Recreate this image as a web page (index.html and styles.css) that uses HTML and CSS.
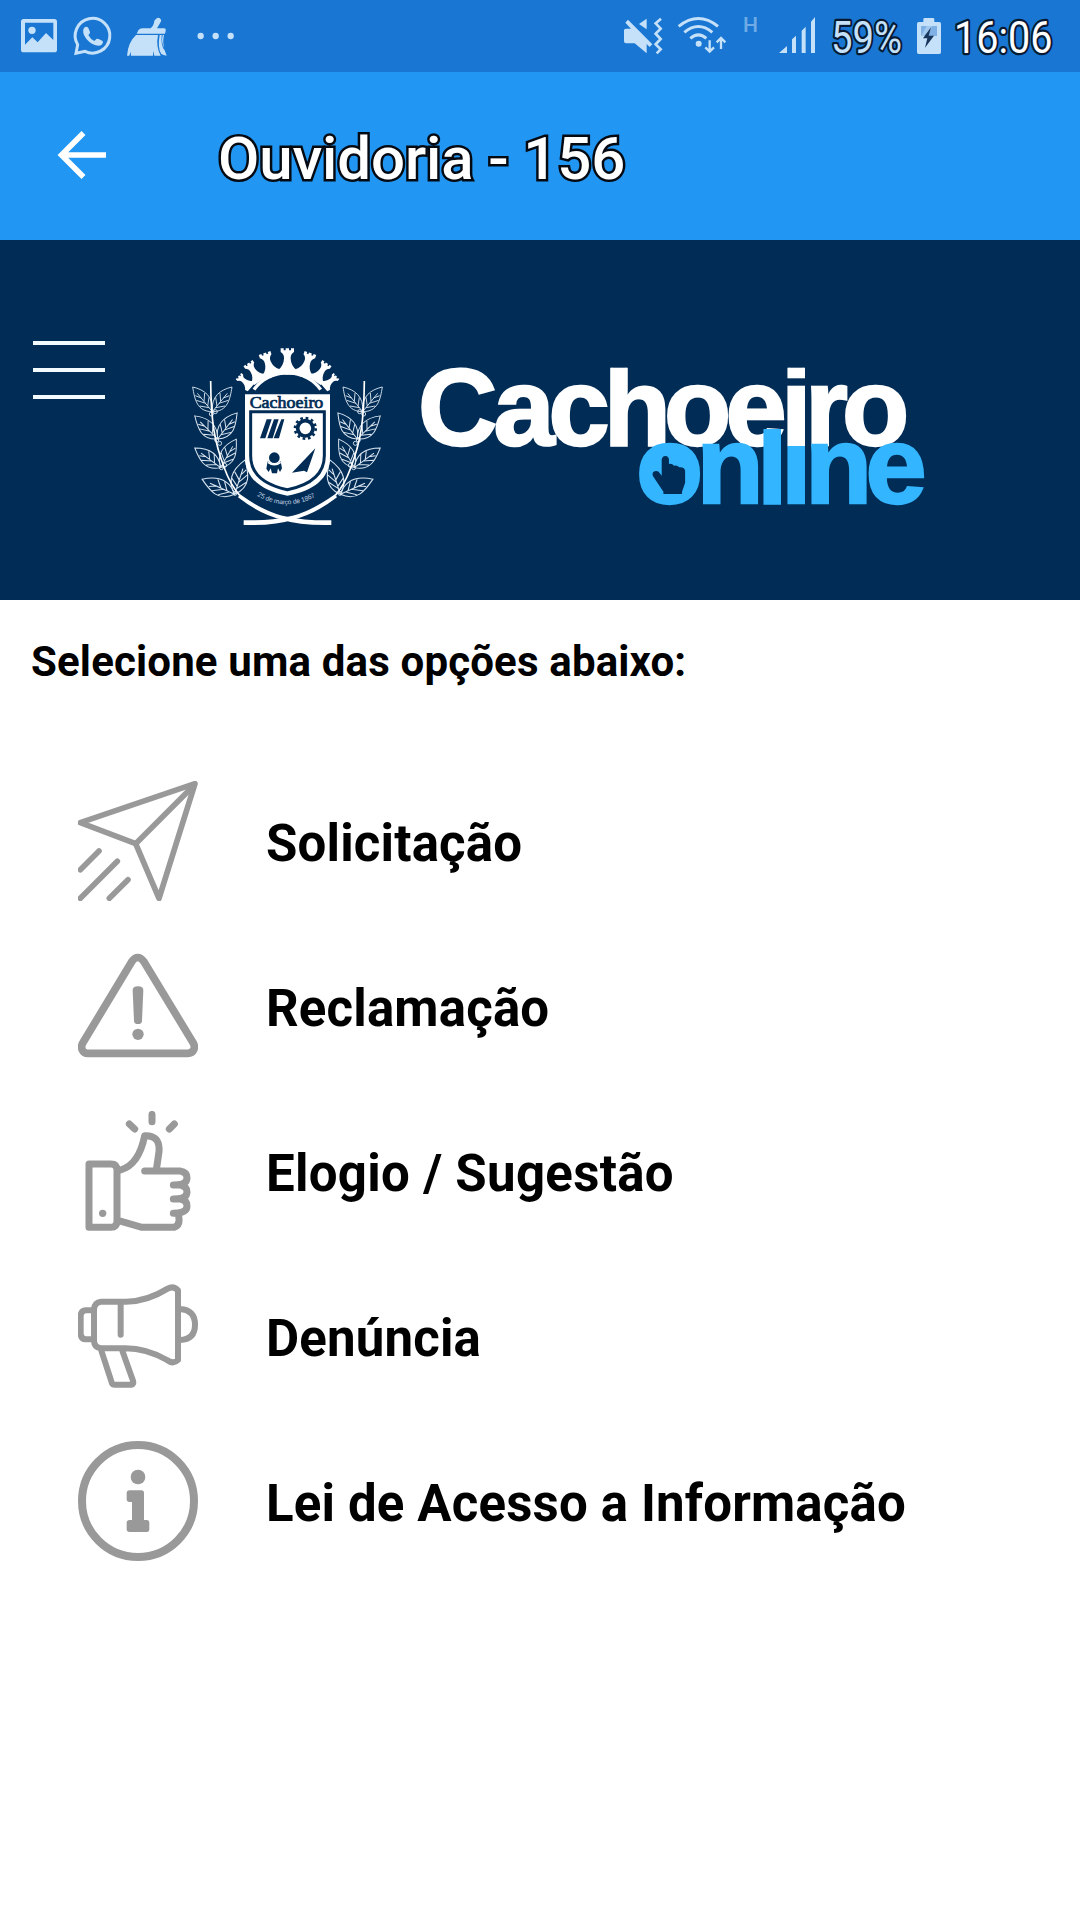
FILE: index.html
```html
<!DOCTYPE html>
<html lang="pt-BR">
<head>
<meta charset="utf-8">
<title>Ouvidoria - 156</title>
<link rel="stylesheet" href="styles.css">
</head>
<body>
<div class="status">
  <div class="status-group">
    <svg width="67" height="72" viewBox="0 0 201 216"><path fill="currentColor" fill-rule="evenodd" d="M71 57H163Q171 57 171 65V149Q171 157 163 157H71Q63 157 63 149V65Q63 57 71 57ZM75 68V134L97 112L113 127L138 99L160 120V68Z"/><circle cx="96" cy="91" r="11" fill="currentColor"/></svg>
    <svg width="50" height="72" viewBox="201 0 150 216"><path fill="none" stroke="currentColor" stroke-width="9" d="M228 160L233 134A52 52 0 1 1 255 154Z"/><path fill="currentColor" d="M252 84Q259 77 265 84L270 96Q271 101 265 105Q271 117 283 123L289 117Q292 115 296 117L308 123Q311 128 305 134Q296 141 277 132Q256 120 250 100Q247 91 252 84Z"/></svg>
    <svg width="65" height="72" viewBox="351 0 195 216"><path fill="currentColor" d="M470 55Q476 51 481 56Q486 60 482 66L471 85H493Q499 86 497 93L495 101H410L415 91Q419 85 427 85H452Q462 76 463 62ZM408 105H474Q467 140 482 167H463L459 152V167H393L392 155L388 167H381Q384 127 408 105ZM479 105H485Q482 139 494 151L500 167Q490 166 484 162Q472 145 479 105ZM488 105H492Q487 128 493 145Q483 128 488 105Z"/></svg>
    <svg width="78" height="72" viewBox="546 0 234 216"><g fill="currentColor"><circle cx="602" cy="108" r="9.500"/><circle cx="647" cy="108" r="9.500"/><circle cx="692" cy="108" r="9.500"/></g></svg>
  </div>
  <div class="status-group">
    <svg width="50" height="72" viewBox="60 0 150 216"><path fill="currentColor" d="M72 91Q72 86 78 86H93L76 68L84 59L157 133L149 141L140 132V160L104 130H78Q72 130 72 124ZM140 56V88L117 72Z"/><path fill="none" stroke="currentColor" stroke-width="8" d="M183 56L167 70L182 86L167 101L182 117L167 133L182 148L170 160"/></svg>
    <svg width="65" height="72" viewBox="210 0 195 216"><g fill="none" stroke="currentColor" stroke-width="9"><path d="M236 79Q295 32 354 79M253 97Q295 62 337 97M271 115Q295 94 319 115"/><path stroke-width="7" d="M329 121V154M316 142L329 155L342 142M363 147V115M350 127L363 114L376 127"/></g><circle cx="296" cy="131" r="9" fill="currentColor"/></svg>
    <svg class="faint" width="40" height="72" viewBox="0 0 40 72"><text x="8" y="32" font-size="21" font-weight="500" textLength="15" lengthAdjust="spacingAndGlyphs">H</text></svg>
    <svg width="45" height="72" viewBox="525 0 135 216"><path fill="currentColor" d="M537 159L561 138V159ZM576 118L588 107V159H576ZM605 92L617 80V159H605ZM633 65L645 51V159H633Z"/></svg>
    <svg width="90" height="72" viewBox="820 0 90 72"><text class="outlined" x="831" y="53" font-size="44" textLength="71" lengthAdjust="spacingAndGlyphs">59%</text></svg>
    <svg width="40" height="72" viewBox="930 0 120 216"><path fill="currentColor" d="M970 66V58Q970 54 974 54H999Q1003 54 1003 58V66H1018Q1023 66 1023 71V157Q1023 162 1018 162H956Q951 162 951 157V71Q951 66 956 66Z"/><path fill="#7fb1e5" d="M963 78H1011V108H963Z"/><path fill="currentColor" d="M980 78H996L986 101H977L968 117L963 108Z" opacity=".5"/><path fill="#18365c" d="M993 82L969 115H982L975 143L1002 107H986Z"/></svg>
    <svg width="130" height="72" viewBox="950 0 130 72"><text class="outlined clock" x="954" y="53" font-size="44" textLength="98.500" lengthAdjust="spacingAndGlyphs">16:06</text></svg>
  </div>
</div>
<header class="appbar">
  <svg class="back" width="50" height="50" viewBox="0 0 50 50"><path d="M49 24H6M26.500 2L4.500 24L26.500 46" fill="none" stroke="#fff" stroke-width="5.600"/></svg>
  <h1 class="title">Ouvidoria - 156</h1>
</header>
<section class="brand">
  <div class="menu"><span></span><span></span><span></span></div>
  <svg class="crest" width="220" height="200" viewBox="0 0 660 600">
    <defs>
      <g id="leaf"><path d="M0 0C-46 0-53-37-59-74C-24-66 4-46 0 0ZM0 0L-45-55M-10-12L-38-17M-20-25L-48-34M-14-17L-10-43M-25-31L-23-56M-33-41L-51-48"/></g>
      <g id="pair"><use href="#leaf"/><use href="#leaf" transform="scale(-1 1)"/></g>
      <g id="branch" fill="none" stroke="#d8e4ef" stroke-width="2.800">
        <use href="#pair" x="97" y="230"/><use href="#pair" transform="translate(113 312) rotate(-4) scale(1.080 1)"/><use href="#pair" transform="translate(122 398) rotate(-12) scale(1.080 1)"/><use href="#pair" transform="translate(164 478) rotate(-24) scale(1.200 1.100)"/>
        <circle cx="94" cy="237" r="6"/><circle cx="106" cy="230" r="6"/><circle cx="110" cy="315" r="6"/><circle cx="119" cy="325" r="6"/><circle cx="124" cy="398" r="6"/><circle cx="134" cy="391" r="6"/><circle cx="165" cy="475" r="6"/>
        <path stroke="#fff" stroke-width="5" d="M92 138C93 260 103 320 133 399Q151 449 179 481"/>
      </g>
      <path id="motto" d="M231 482Q321 534 412 482"/>
      <path id="sweep" d="M180 478Q260 535 322 545Q370 557 454 556V570Q360 572 306 554Q238 537 174 487Z"/>
      <path id="tower" d="M-20-61V-50Q-9-43-10-30Q-11-8-29 5L-25 18H25L29 5Q11-8 10-30Q9-43 20-50V-61H11V-55H5V-61H-5V-55H-11V-61Z"/>
    </defs>
    <use href="#branch"/><use href="#branch" transform="translate(645 0) scale(-1 1)"/>
    <g fill="#fff"><use href="#sweep"/><use href="#sweep" transform="translate(645 0) scale(-1 1)"/></g>
    <g fill="#fff"><use href="#tower" transform="translate(322 101)"/><use href="#tower" transform="translate(272 107) rotate(-19) scale(.92)"/><use href="#tower" transform="translate(373 107) rotate(19) scale(.92)"/><use href="#tower" transform="translate(232 126) rotate(-34) scale(.82)"/><use href="#tower" transform="translate(413 126) rotate(34) scale(.82)"/><use href="#tower" transform="translate(205 149) rotate(-49) scale(.64)"/><use href="#tower" transform="translate(440 149) rotate(49) scale(.64)"/></g>
    <path fill="none" stroke="#fff" stroke-width="10" d="M222 164Q255 117 322 113Q389 117 422 164"/>
    <path fill="none" stroke="#002c56" stroke-width="5" stroke-dasharray="8 21" d="M234 166Q260 125 322 121Q384 125 412 166"/>
    <path fill="#fff" d="M195 178H450V365C450 430 400 468 322 482C245 468 195 430 195 365Z"/>
    <path fill="none" stroke="#002c56" stroke-width="9" d="M212 230H433V362C433 417 390 450 322 464C255 450 212 417 212 362Z"/>
    <text class="crest-name" x="209" y="220" textLength="221" lengthAdjust="spacingAndGlyphs">Cachoeiro</text>
    <g fill="#002c56"><path d="M260 253H275L256 310H240ZM282 253H296L278 310H262ZM304 253H313L297 310H281Z"/><circle cx="283" cy="368" r="16"/><path d="M263 379Q283 397 302 379L306 400L300 411L294 400L291 415H276L272 400L266 411L259 401ZM406 340L381 412L372 407L336 413Z"/></g>
    <path fill="none" stroke="#fff" stroke-width="5" d="M264 382Q283 396 302 382"/>
    <circle cx="376" cy="280" r="23" fill="none" stroke="#002c56" stroke-width="11"/><circle cx="376" cy="280" r="31" fill="none" stroke="#002c56" stroke-width="8" stroke-dasharray="8 8.230"/>
    <text class="motto"><textPath href="#motto" textLength="184">25 de março de 1867</textPath></text>
  </svg>
  <svg class="wordmark" width="540" height="180" viewBox="400 345 540 180">
    <defs>
      <clipPath id="top"><path d="M400 360H600V367.700H940V480H400Z"/></clipPath>
      <clipPath id="below"><path d="M630 429H783V446H810V429H940V525H630Z"/></clipPath>
    </defs>
    <g clip-path="url(#top)"><text class="word" y="445" x="418 493.500 548.500 603.700 664 725.500 781 805 842">Cachoeiro</text></g>
    <g clip-path="url(#below)"><text class="word word-blue" y="503" x="636 696.500 757 781 805 865.500">online</text></g>
    <g transform="translate(400 345) scale(.34435 .33333)"><ellipse cx="782" cy="391" rx="55" ry="65" fill="#33b5ff"/><path fill="#002c56" d="M760 392V343Q762 333 771 333Q780 334 781 343V357Q790 355 796 362Q805 359 811 367Q826 366 828 377V413L819 440V447H765V440L734 392Q732 382 739 379Q745 376 751 380Z"/></g>
  </svg>
</section>
<main class="content">
  <p class="prompt">Selecione uma das opções abaixo:</p>
  <ul class="options">
    <li><svg class="icon" viewBox="54 63 360 360"><g stroke-width="17"><path d="M61 188L405 71L297 415L227 251Z"/><path d="M227 251L397 81M61 329L117 273M61 415L172 304M148 415L204 359"/></g></svg><span>Solicitação</span></li>
    <li><svg class="icon" viewBox="54 48 360 360"><path stroke-width="23" d="M216 94Q233 71 251 94L398 336C409 352 401 370 383 370H84C67 370 59 352 70 336Z"/><path class="solid" d="M218 181Q218 169 234 169Q250 169 250 181L246 272Q246 282 234 282Q222 282 222 272Z"/><circle class="solid" cx="234" cy="313" r="17"/></svg><span>Reclamação</span></li>
    <li><svg class="icon" viewBox="54 33 360 360"><g stroke-width="21"><path d="M87 192H153Q171 192 171 211V363Q171 382 153 382H87ZM182 210Q237 194 254 107Q301 105 297 155L290 203M254 213H360Q381 216 381 234Q381 255 340 255H360Q381 259 381 276Q381 297 340 297H360Q381 300 381 318Q381 340 340 340H354Q364 374 343 382H246L176 362M276 43V65M208 72L224 87M343 72L328 87"/></g><circle class="solid" cx="128" cy="340" r="11"/></svg><span class="wide">Elogio / Sugestão</span></li>
    <li><svg class="icon" viewBox="54 48 360 360"><g stroke-width="18"><path d="M123 125H195Q259 126 323 86Q340 76 354 91V300Q340 314 321 300Q255 263 190 265H123Q103 263 102 243V147Q104 127 123 125ZM182 132V224M101 151H77Q63 152 62 167V222Q63 237 77 238H101M360 147Q405 150 405 194Q405 238 360 240M123 269L156 370Q158 374 164 374H214Q222 373 219 362L187 272"/></g></svg><span>Denúncia</span></li>
    <li><svg class="icon" viewBox="54 63 360 360"><circle cx="234" cy="243" r="168" stroke-width="24"/><circle class="solid" cx="234" cy="171" r="22"/><path class="solid" d="M209 211H244Q252 211 252 219V300H260Q268 300 268 308V328Q268 336 260 336H209Q200 336 200 328V308Q200 300 209 300H216V246H209Q200 246 200 238V219Q200 211 209 211Z"/></svg><span>Lei de Acesso a Informação</span></li>
  </ul>
</main>
</body>
</html>
```
FILE: styles.css
```css
* { box-sizing: border-box; }
body { margin: 0; width: 1080px; height: 1920px; background: #fff; font-family: Roboto, sans-serif; overflow: hidden; }
svg { display: block; flex: none; }
.status { height: 72px; display: flex; justify-content: space-between; background: #1976d2; color: #c5e1fa; }
.status-group { display: flex; }
.status text { font-family: Roboto, sans-serif; fill: currentColor; }
.faint { opacity: .5; }
.outlined { stroke: #071a33; stroke-width: 4.5px; paint-order: stroke; stroke-linejoin: round; }
.status .clock { fill: #fff; }
.appbar { height: 168px; display: flex; align-items: center; padding-left: 57px; background: #2196f3; }
.title { margin: 5px 0 0 111px; font-size: 60px; line-height: 72px; font-weight: 500; letter-spacing: -.12px; color: #fff; -webkit-text-stroke: 5px #050a12; paint-order: stroke fill; white-space: nowrap; }
.brand { height: 360px; display: flex; align-items: flex-start; background: #002c56; padding-left: 33px; }
.menu { width: 72px; margin-top: 101px; display: flex; flex-direction: column; gap: 23px; }
.menu span { height: 4px; background: #f2fbff; }
.crest { margin: 95px 0 0 75px; }
.wordmark { margin-top: 105px; }
.crest-name { font: 48px "Liberation Serif", serif; fill: #002c56; stroke: #002c56; stroke-width: 2px; }
.motto { font: 20px "Liberation Sans", sans-serif; fill: #c5d3e1; }
.word { font: bold 110px "Liberation Sans", sans-serif; fill: #fff; stroke: #fff; stroke-width: 2.4px; }
.word-blue { fill: #33b5ff; stroke: #33b5ff; }
.content { padding-top: 36px; }
.prompt { margin: 0 0 0 31px; font-size: 42px; line-height: 52px; font-weight: 700; letter-spacing: .16px; color: #000; }
.options { list-style: none; margin: 70.500px 0 0; padding: 0 0 0 78px; }
.options li { height: 165px; display: flex; align-items: center; gap: 68px; font-size: 51px; font-weight: 700; letter-spacing: .16px; color: #000; white-space: nowrap; }
.options span { margin-top: 4px; }
.options .wide { letter-spacing: .3px; }
.icon { width: 120px; height: 120px; fill: none; stroke: #999; stroke-linecap: round; stroke-linejoin: round; }
.solid { fill: #999; stroke: none; }
```
